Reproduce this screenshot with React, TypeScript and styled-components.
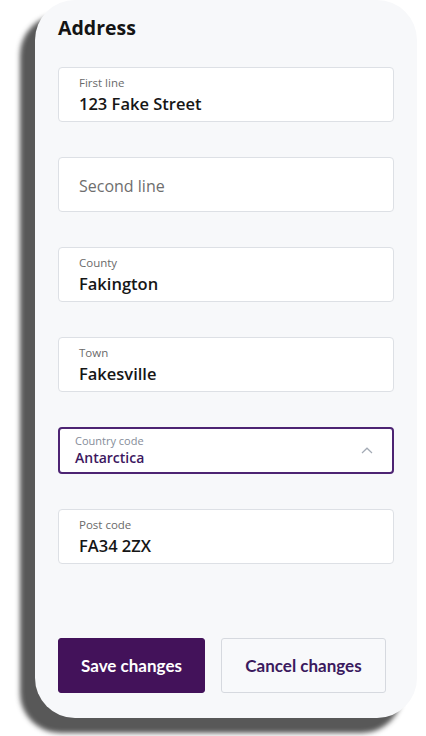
import styled, { createGlobalStyle } from "styled-components";

const GlobalStyle = createGlobalStyle`
  html, body {
    margin: 0;
    padding: 0;
    background: #ffffff;
  }
  * {
    box-sizing: border-box;
  }
`;

type T_Field = {
  label: string;
  value?: string;
  placeholder?: string;
};

function TextField({ label, value, placeholder }: T_Field) {
  if (!value) {
    return (
      <FieldBox>
        <Placeholder>{placeholder ?? label}</Placeholder>
      </FieldBox>
    );
  }
  return (
    <FieldBox>
      <FieldLabel>{label}</FieldLabel>
      <FieldValue>{value}</FieldValue>
    </FieldBox>
  );
}

function SelectField({ label, value }: T_Field) {
  return (
    <SelectBox>
      <SelectText>
        <SelectLabel>{label}</SelectLabel>
        <SelectValue>{value}</SelectValue>
      </SelectText>
      <svg width="12" height="7" viewBox="0 0 12 7" fill="none">
        <path d="M1 6L6 1.2L11 6" stroke="#a3aab5" strokeWidth="1.2" />
      </svg>
    </SelectBox>
  );
}

export default function App() {
  return (
    <>
      <GlobalStyle />
      <Page>
        <Card>
          <Heading>Address</Heading>
          <Fields>
            <TextField label="First line" value="123 Fake Street" />
            <TextField label="Second line" placeholder="Second line" />
            <TextField label="County" value="Fakington" />
            <TextField label="Town" value="Fakesville" />
            <SelectField label="Country code" value="Antarctica" />
            <TextField label="Post code" value="FA34 2ZX" />
          </Fields>
          <Actions>
            <Button $primary>Save changes</Button>
            <Button>Cancel changes</Button>
          </Actions>
        </Card>
      </Page>
    </>
  );
}

const Page = styled.div`
  width: 426px;
  height: 736px;
  padding-left: 35px;
  overflow: hidden;
`;

const Card = styled.div`
  width: 382px;
  height: 718px;
  padding: 14px 23px 25px;
  display: flex;
  flex-flow: column nowrap;
  background-color: #f7f8fa;
  border-radius: 40px;
  box-shadow: -15px 15px 5px rgba(70, 70, 70, 0.9);
`;

const Heading = styled.h2`
  margin: 0;
  height: 28px;
  font-family: "Open Sans", sans-serif;
  font-size: 19.5px;
  line-height: 28px;
  font-weight: 700;
  color: #141414;
`;

const Fields = styled.div`
  margin-top: 25px;
  display: flex;
  flex-flow: column nowrap;
  gap: 35px;
`;

const FieldBox = styled.div`
  height: 55px;
  padding: 7px 20px 0;
  display: flex;
  flex-flow: column nowrap;
  justify-content: flex-start;
  background-color: #ffffff;
  border: 1px solid #dde0e5;
  border-radius: 4px;
  font-family: "Open Sans", sans-serif;
`;

const FieldLabel = styled.span`
  font-size: 11.5px;
  line-height: 15px;
  color: #6a6a6a;
`;

const FieldValue = styled.span`
  margin-top: 3px;
  font-size: 16.5px;
  line-height: 22px;
  font-weight: 600;
  color: #161616;
`;

const Placeholder = styled.span`
  margin-top: 10px;
  font-size: 16px;
  line-height: 22px;
  color: #6e6e6e;
`;

const SelectBox = styled.div`
  height: 47px;
  padding: 4px 19px 0 15px;
  display: flex;
  align-items: center;
  justify-content: space-between;
  background-color: #ffffff;
  border: 2px solid #4d2473;
  border-radius: 4px;
  font-family: "Open Sans", sans-serif;

  svg {
    margin-top: -4px;
  }
`;

const SelectText = styled.div`
  align-self: flex-start;
  display: flex;
  flex-flow: column nowrap;
`;

const SelectLabel = styled.span`
  font-size: 11px;
  line-height: 15px;
  color: #858c99;
`;

const SelectValue = styled.span`
  font-size: 14px;
  line-height: 20px;
  font-weight: 600;
  color: #3c1760;
`;

const Actions = styled.div`
  margin-top: auto;
  display: flex;
  gap: 16px;
`;

const Button = styled.button<{ $primary?: boolean }>`
  height: 55px;
  width: ${({ $primary }) => ($primary ? "147px" : "165px")};
  padding: 0;
  font-family: Lato, sans-serif;
  font-size: 17px;
  font-weight: 700;
  border-radius: 3px;
  cursor: pointer;
  color: ${({ $primary }) => ($primary ? "#ffffff" : "#3b1a5e")};
  background-color: ${({ $primary }) => ($primary ? "#43125a" : "#f8f9fb")};
  border: 1px solid ${({ $primary }) => ($primary ? "#43125a" : "#d6d9df")};
`;
